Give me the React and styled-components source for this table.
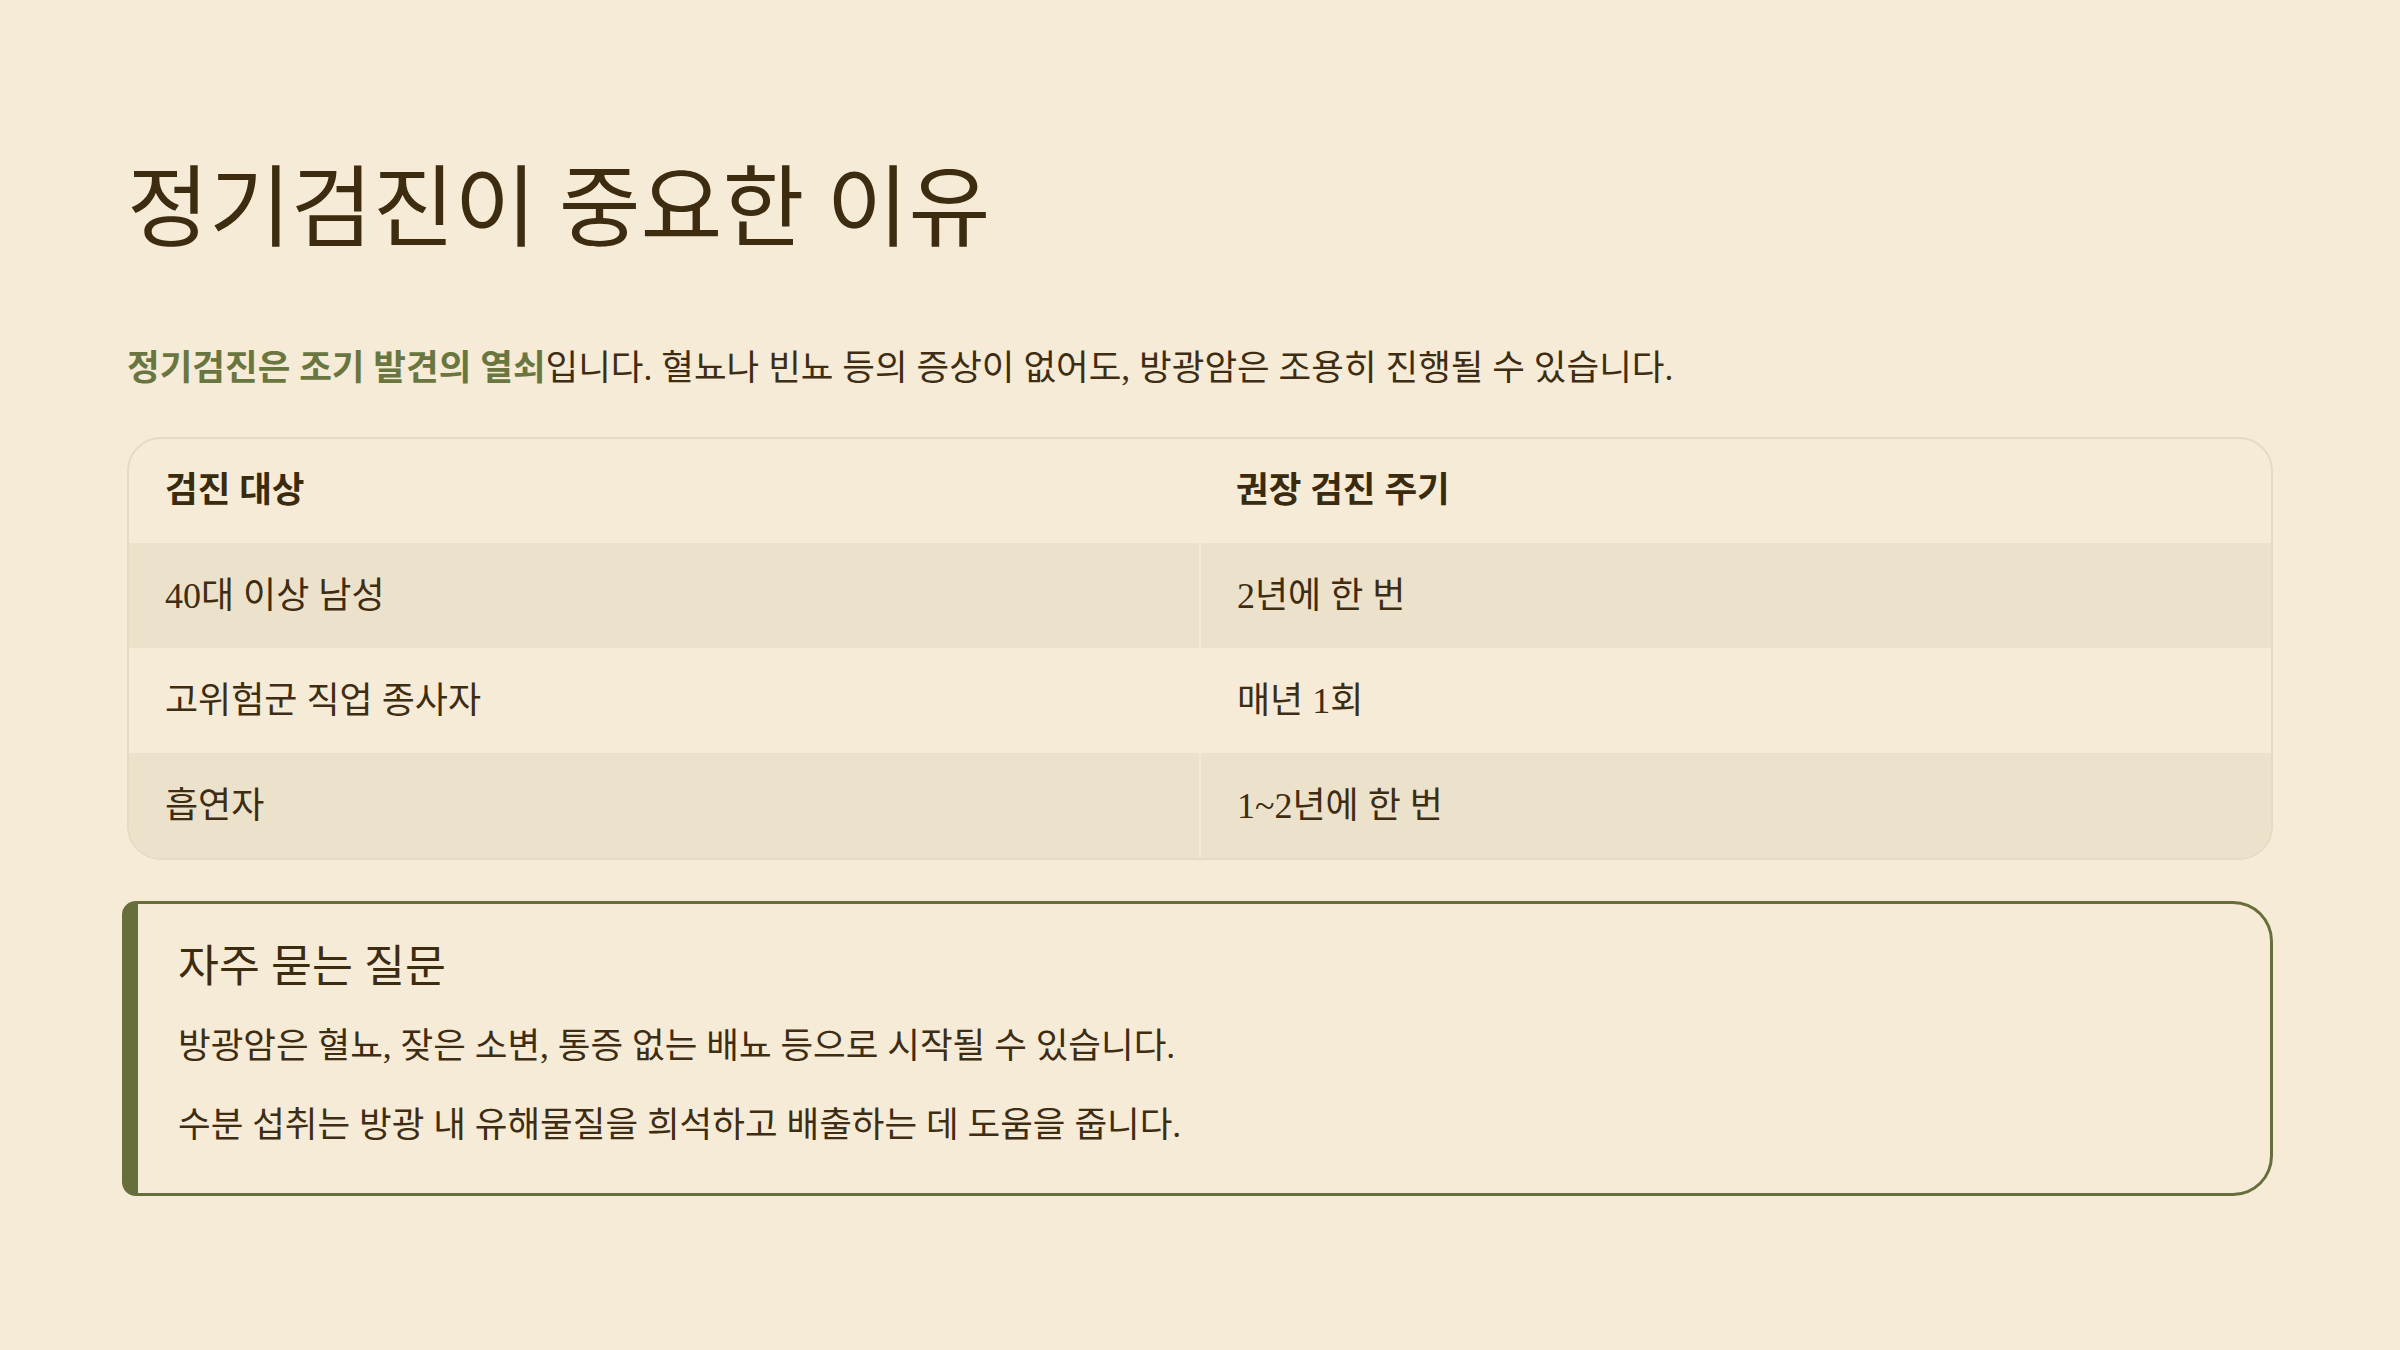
import React from 'react'
import styled, { createGlobalStyle } from 'styled-components'

const GlobalStyle = createGlobalStyle`
  html, body {
    margin: 0;
    padding: 0;
    background: #f5ebd6;
  }
  body {
    font-family: "Liberation Serif", "Noto Sans CJK KR", serif;
    color: #3e2d12;
  }
`

const rows = [
  { who: '40대 이상 남성', when: '2년에 한 번' },
  { who: '고위험군 직업 종사자', when: '매년 1회' },
  { who: '흡연자', when: '1~2년에 한 번' },
]

const faq = [
  '방광암은 혈뇨, 잦은 소변, 통증 없는 배뇨 등으로 시작될 수 있습니다.',
  '수분 섭취는 방광 내 유해물질을 희석하고 배출하는 데 도움을 줍니다.',
]

const App = () => {
  return (
    <Page>
      <GlobalStyle />
      <Title>정기검진이 중요한 이유</Title>
      <Intro>
        <Highlight>정기검진은 조기 발견의 열쇠</Highlight>입니다. 혈뇨나 빈뇨 등의 증상이 없어도, 방광암은 조용히 진행될 수 있습니다.
      </Intro>
      <TableWrap>
        <Table>
          <thead>
            <tr>
              <HeadCell>검진 대상</HeadCell>
              <HeadCell>권장 검진 주기</HeadCell>
            </tr>
          </thead>
          <tbody>
            {rows.map((r, i) => (
              <Row key={i} $shaded={i % 2 === 0}>
                <Cell>{r.who}</Cell>
                <Cell>{r.when}</Cell>
              </Row>
            ))}
          </tbody>
        </Table>
      </TableWrap>
      <FaqBox>
        <FaqTitle>자주 묻는 질문</FaqTitle>
        {faq.map((t, i) => (
          <FaqText key={i}>{t}</FaqText>
        ))}
      </FaqBox>
    </Page>
  )
}

export default App

const Page = styled.div`
  box-sizing: border-box;
  width: 2400px;
  height: 1350px;
  padding: 156px 127px 0;
  display: flex;
  flex-direction: column;
`
const Title = styled.h1`
  margin: 0;
  font-size: 89px;
  line-height: 1.2;
  font-weight: 400;
  color: #3d2c10;
`
const Intro = styled.p`
  margin: 77px 0 0;
  font-size: 35.5px;
  line-height: 1.6;
`
const Highlight = styled.strong`
  color: #69763f;
  font-weight: 700;
`
const TableWrap = styled.div`
  margin-top: 40px;
  border: 2px solid #e5dac2;
  border-radius: 34px;
  overflow: hidden;
`
const Table = styled.table`
  width: 100%;
  border-collapse: collapse;
  table-layout: fixed;
`
const HeadCell = styled.th`
  text-align: left;
  font-size: 35.5px;
  line-height: 1.5;
  font-weight: 700;
  padding: 25.5px 36px 25.5px;
  color: #3a2a0e;
`
const Row = styled.tr`
  background: ${p => (p.$shaded ? '#ece1ca' : 'transparent')};
`
const Cell = styled.td`
  font-size: 36px;
  line-height: 1.5;
  padding: 25.75px 36px 25.25px;
  & + & {
    border-left: 2px solid #f3e9d4;
  }
`
const FaqBox = styled.div`
  margin: 41px 0 0 -5px;
  border: 3px solid #676e3b;
  border-left-width: 16px;
  border-radius: 14px 40px 40px 14px;
  padding: 35px 40px 39px;
`
const FaqTitle = styled.h3`
  margin: 0 0 21.5px;
  font-size: 44.5px;
  line-height: 1.3;
  font-weight: 400;
  color: #3d2c10;
`
const FaqText = styled.p`
  margin: 0;
  font-size: 35.5px;
  line-height: 1.6;
  & + & {
    margin-top: 22.5px;
  }
`
